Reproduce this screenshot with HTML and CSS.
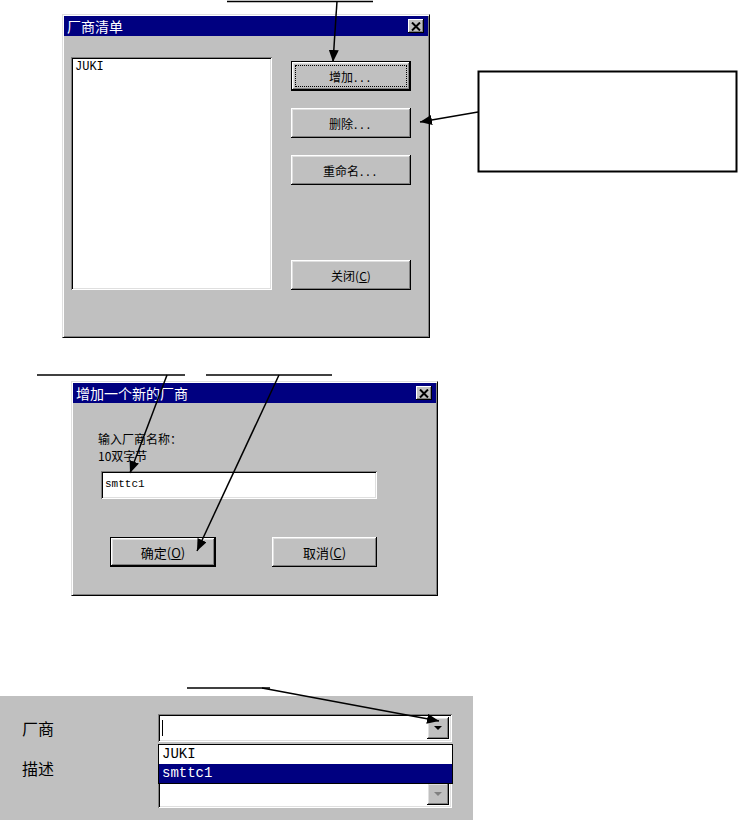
FILE: index.html
```html
<!DOCTYPE html>
<html lang="zh">
<head>
  <meta charset="UTF-8">
  <title>厂商清单</title>
  <link rel="stylesheet" href="styles.css">
</head>
<body>
  <div class="page">

    <!-- 厂商清单 -->
    <div class="dialog dlg-vendors">
      <div class="titlebar">
        <span>厂商清单</span>
        <span class="close-btn"><svg width="10" height="9" viewBox="0 0 10 9"><path d="M1 0.5L9 8.5M9 0.5L1 8.5" stroke="#000" stroke-width="2"/></svg></span>
      </div>
      <div class="vendors-body">
        <div class="sunken listbox">
          <div class="list-item">JUKI</div>
        </div>
        <div class="btn-col">
          <button class="btn btn-default"><span class="focus">增加<span class="ell">...</span></span></button>
          <button class="btn">删除<span class="ell">...</span></button>
          <button class="btn">重命名<span class="ell">...</span></button>
          <button class="btn btn-last">关闭(<u>C</u>)</button>
        </div>
      </div>
    </div>

    <!-- 增加一个新的厂商 -->
    <div class="dialog dlg-add">
      <div class="titlebar">
        <span>增加一个新的厂商</span>
        <span class="close-btn"><svg width="10" height="9" viewBox="0 0 10 9"><path d="M1 0.5L9 8.5M9 0.5L1 8.5" stroke="#000" stroke-width="2"/></svg></span>
      </div>
      <div class="add-body">
        <div class="prompt">输入厂商名称：</div>
        <div class="prompt">10双字节</div>
        <div class="sunken name-input">smttc1</div>
        <div class="add-buttons">
          <button class="btn btn-ok">确定(<u>O</u>)</button>
          <button class="btn btn-cancel">取消(<u>C</u>)</button>
        </div>
      </div>
    </div>

    <!-- 选择厂商 -->
    <div class="panel">
      <div class="row">
        <span class="label">厂商</span>
        <div class="combo-wrap">
          <div class="sunken combo">
            <span class="caret"></span>
            <span class="drop-btn"><span class="tri"></span></span>
          </div>
          <div class="dropdown">
            <div class="opt">JUKI</div>
            <div class="opt opt-sel">smttc1</div>
          </div>
        </div>
      </div>
      <div class="row row-desc">
        <span class="label">描述</span>
        <div class="sunken combo combo-low">
          <span class="drop-btn"><span class="tri tri-off"></span></span>
        </div>
      </div>
    </div>

    <!-- 说明线和箭头 -->
    <svg class="notes" width="739" height="820" viewBox="0 0 739 820">
      <defs>
        <marker id="ah" viewBox="0 0 12 10" refX="12" refY="5" markerWidth="12" markerHeight="10" orient="auto" markerUnits="userSpaceOnUse">
          <path d="M0 0L12 5L0 10z" fill="#000"/>
        </marker>
      </defs>
      <g stroke="#000" stroke-width="1.5" fill="none">
        <line x1="227" y1="1.5" x2="373" y2="1.5"/>
        <line x1="337" y1="1" x2="333" y2="62" marker-end="url(#ah)"/>
        <rect x="478.5" y="71.5" width="258" height="100" stroke-width="2"/>
        <line x1="478" y1="112" x2="420" y2="122" marker-end="url(#ah)"/>
        <line x1="37" y1="375" x2="185" y2="375"/>
        <line x1="206" y1="375" x2="332" y2="375"/>
        <line x1="167" y1="375" x2="130" y2="473" marker-end="url(#ah)"/>
        <line x1="279" y1="375" x2="197" y2="551" marker-end="url(#ah)"/>
        <line x1="187" y1="688" x2="270" y2="688"/>
        <line x1="262" y1="688" x2="439" y2="721" marker-end="url(#ah)"/>
      </g>
    </svg>
  </div>
</body>
</html>
```

FILE: styles.css
```css
:root {
  --gris: #c0c0c0;
  --gris-osc: #808080;
  --gris-cla: #dfdfdf;
  --azul: #000080;
}
body {
  margin: 0;
  background: #fff;
  color: #000;
  font-family: "Noto Sans CJK SC", "Liberation Sans", sans-serif;
  font-size: 12px;
}
.page {
  position: relative;
  width: 739px;
  height: 820px;
  overflow: hidden;
}
.notes {
  position: absolute;
  left: 0;
  top: 0;
  pointer-events: none;
}

/* ventanas */
.dialog {
  box-sizing: border-box;
  background: var(--gris);
  border: 1px solid;
  border-color: var(--gris-cla) #000 #000 var(--gris-cla);
  box-shadow: inset 1px 1px #fff, inset -1px -1px var(--gris-osc);
  padding: 1px;
}
.titlebar {
  height: 20px;
  background: var(--azul);
  color: #fff;
  font-size: 14px;
  line-height: 20px;
  padding-left: 3px;
  display: flex;
  align-items: center;
  justify-content: space-between;
}
.close-btn {
  width: 16px;
  height: 14px;
  margin-right: 4px;
  background: var(--gris);
  box-shadow: inset -1px -1px #000, inset 1px 1px #fff, inset -2px -2px var(--gris-osc);
  display: flex;
  align-items: center;
  justify-content: center;
}
.sunken {
  box-sizing: border-box;
  background: #fff;
  box-shadow: inset 1px 1px var(--gris-osc), inset -1px -1px #fff, inset 2px 2px #000, inset -2px -2px var(--gris-cla);
}
.btn {
  box-sizing: border-box;
  background: var(--gris);
  border: none;
  padding: 0;
  font-family: inherit;
  font-size: 12px;
  color: #000;
  box-shadow: inset -1px -1px #000, inset 1px 1px #fff, inset -2px -2px var(--gris-osc), inset 2px 2px var(--gris-cla);
  display: flex;
  align-items: center;
  justify-content: center;
}
.btn-default {
  border: 1px solid #000;
}
.btn .focus {
  align-self: stretch;
  flex: 1;
  margin: 3px;
  border: 1px dotted #000;
  display: flex;
  align-items: center;
  justify-content: center;
}
.ell {
  letter-spacing: 3px;
  margin-left: 1px;
}
u {
  text-decoration: underline;
  text-underline-offset: 1px;
}

/* lista de fabricantes */
.dlg-vendors {
  width: 368px;
  height: 324px;
  margin: 14px 0 0 62px;
}
.vendors-body {
  display: flex;
  gap: 19px;
  padding: 21px 0 0 7px;
}
.listbox {
  width: 201px;
  height: 233px;
  padding: 3px 4px;
}
.list-item {
  font-family: "Liberation Mono", monospace;
  font-size: 12px;
  line-height: 14px;
}
.btn-col {
  display: flex;
  flex-direction: column;
  gap: 17px;
  padding-top: 4px;
}
.btn-col .btn {
  width: 120px;
  height: 30px;
}
.btn-col .btn-last {
  margin-top: 58px;
}

/* nuevo fabricante */
.dlg-add {
  width: 367px;
  height: 215px;
  margin: 43px 0 0 71px;
}
.add-body {
  padding: 27px 0 0 25px;
}
.prompt {
  font-size: 12px;
  line-height: 17px;
  height: 17px;
}
.name-input {
  width: 276px;
  height: 28px;
  margin: 7px 0 0 3px;
  padding: 5px 4px;
  font-family: "Liberation Mono", monospace;
  font-size: 11px;
  line-height: 16px;
}
.add-buttons {
  display: flex;
  gap: 56px;
  margin: 38px 0 0 12px;
}
.add-buttons .btn {
  height: 30px;
  font-size: 13px;
}
.btn-ok {
  width: 106px;
  border: 1px solid #000;
}
.btn-cancel {
  width: 105px;
}

/* panel inferior */
.panel {
  box-sizing: border-box;
  width: 473px;
  height: 124px;
  margin-top: 100px;
  background: var(--gris);
  padding: 18px 0 0 22px;
}
.row {
  display: flex;
  align-items: center;
}
.label {
  width: 136px;
  font-size: 16px;
}
.combo-wrap {
  position: relative;
}
.combo {
  width: 294px;
  height: 28px;
  display: flex;
  align-items: center;
  justify-content: space-between;
  padding: 2px 3px 2px 4px;
}
.caret {
  width: 1px;
  height: 16px;
  background: #000;
}
.drop-btn {
  width: 22px;
  height: 22px;
  background: var(--gris);
  box-shadow: inset -1px -1px #000, inset 1px 1px #fff, inset -2px -2px var(--gris-osc), inset 2px 2px var(--gris-cla);
  display: flex;
  align-items: center;
  justify-content: center;
  margin-left: auto;
}
.tri {
  width: 0;
  height: 0;
  border-left: 4px solid transparent;
  border-right: 4px solid transparent;
  border-top: 4px solid #000;
}
.tri-off {
  border-top-color: var(--gris-osc);
}
.dropdown {
  position: absolute;
  left: 0;
  top: 30px;
  width: 295px;
  box-sizing: border-box;
  border: 1px solid #000;
  background: #fff;
  z-index: 2;
}
.opt {
  height: 19px;
  line-height: 19px;
  padding-left: 3px;
  font-family: "Liberation Mono", monospace;
  font-size: 14px;
}
.opt-sel {
  background: var(--azul);
  color: #fff;
}
.row-desc {
  align-items: flex-start;
  margin-top: 16px;
}
.row-desc .label {
  line-height: 20px;
}
.combo-low {
  margin-top: 22px;
}
```
